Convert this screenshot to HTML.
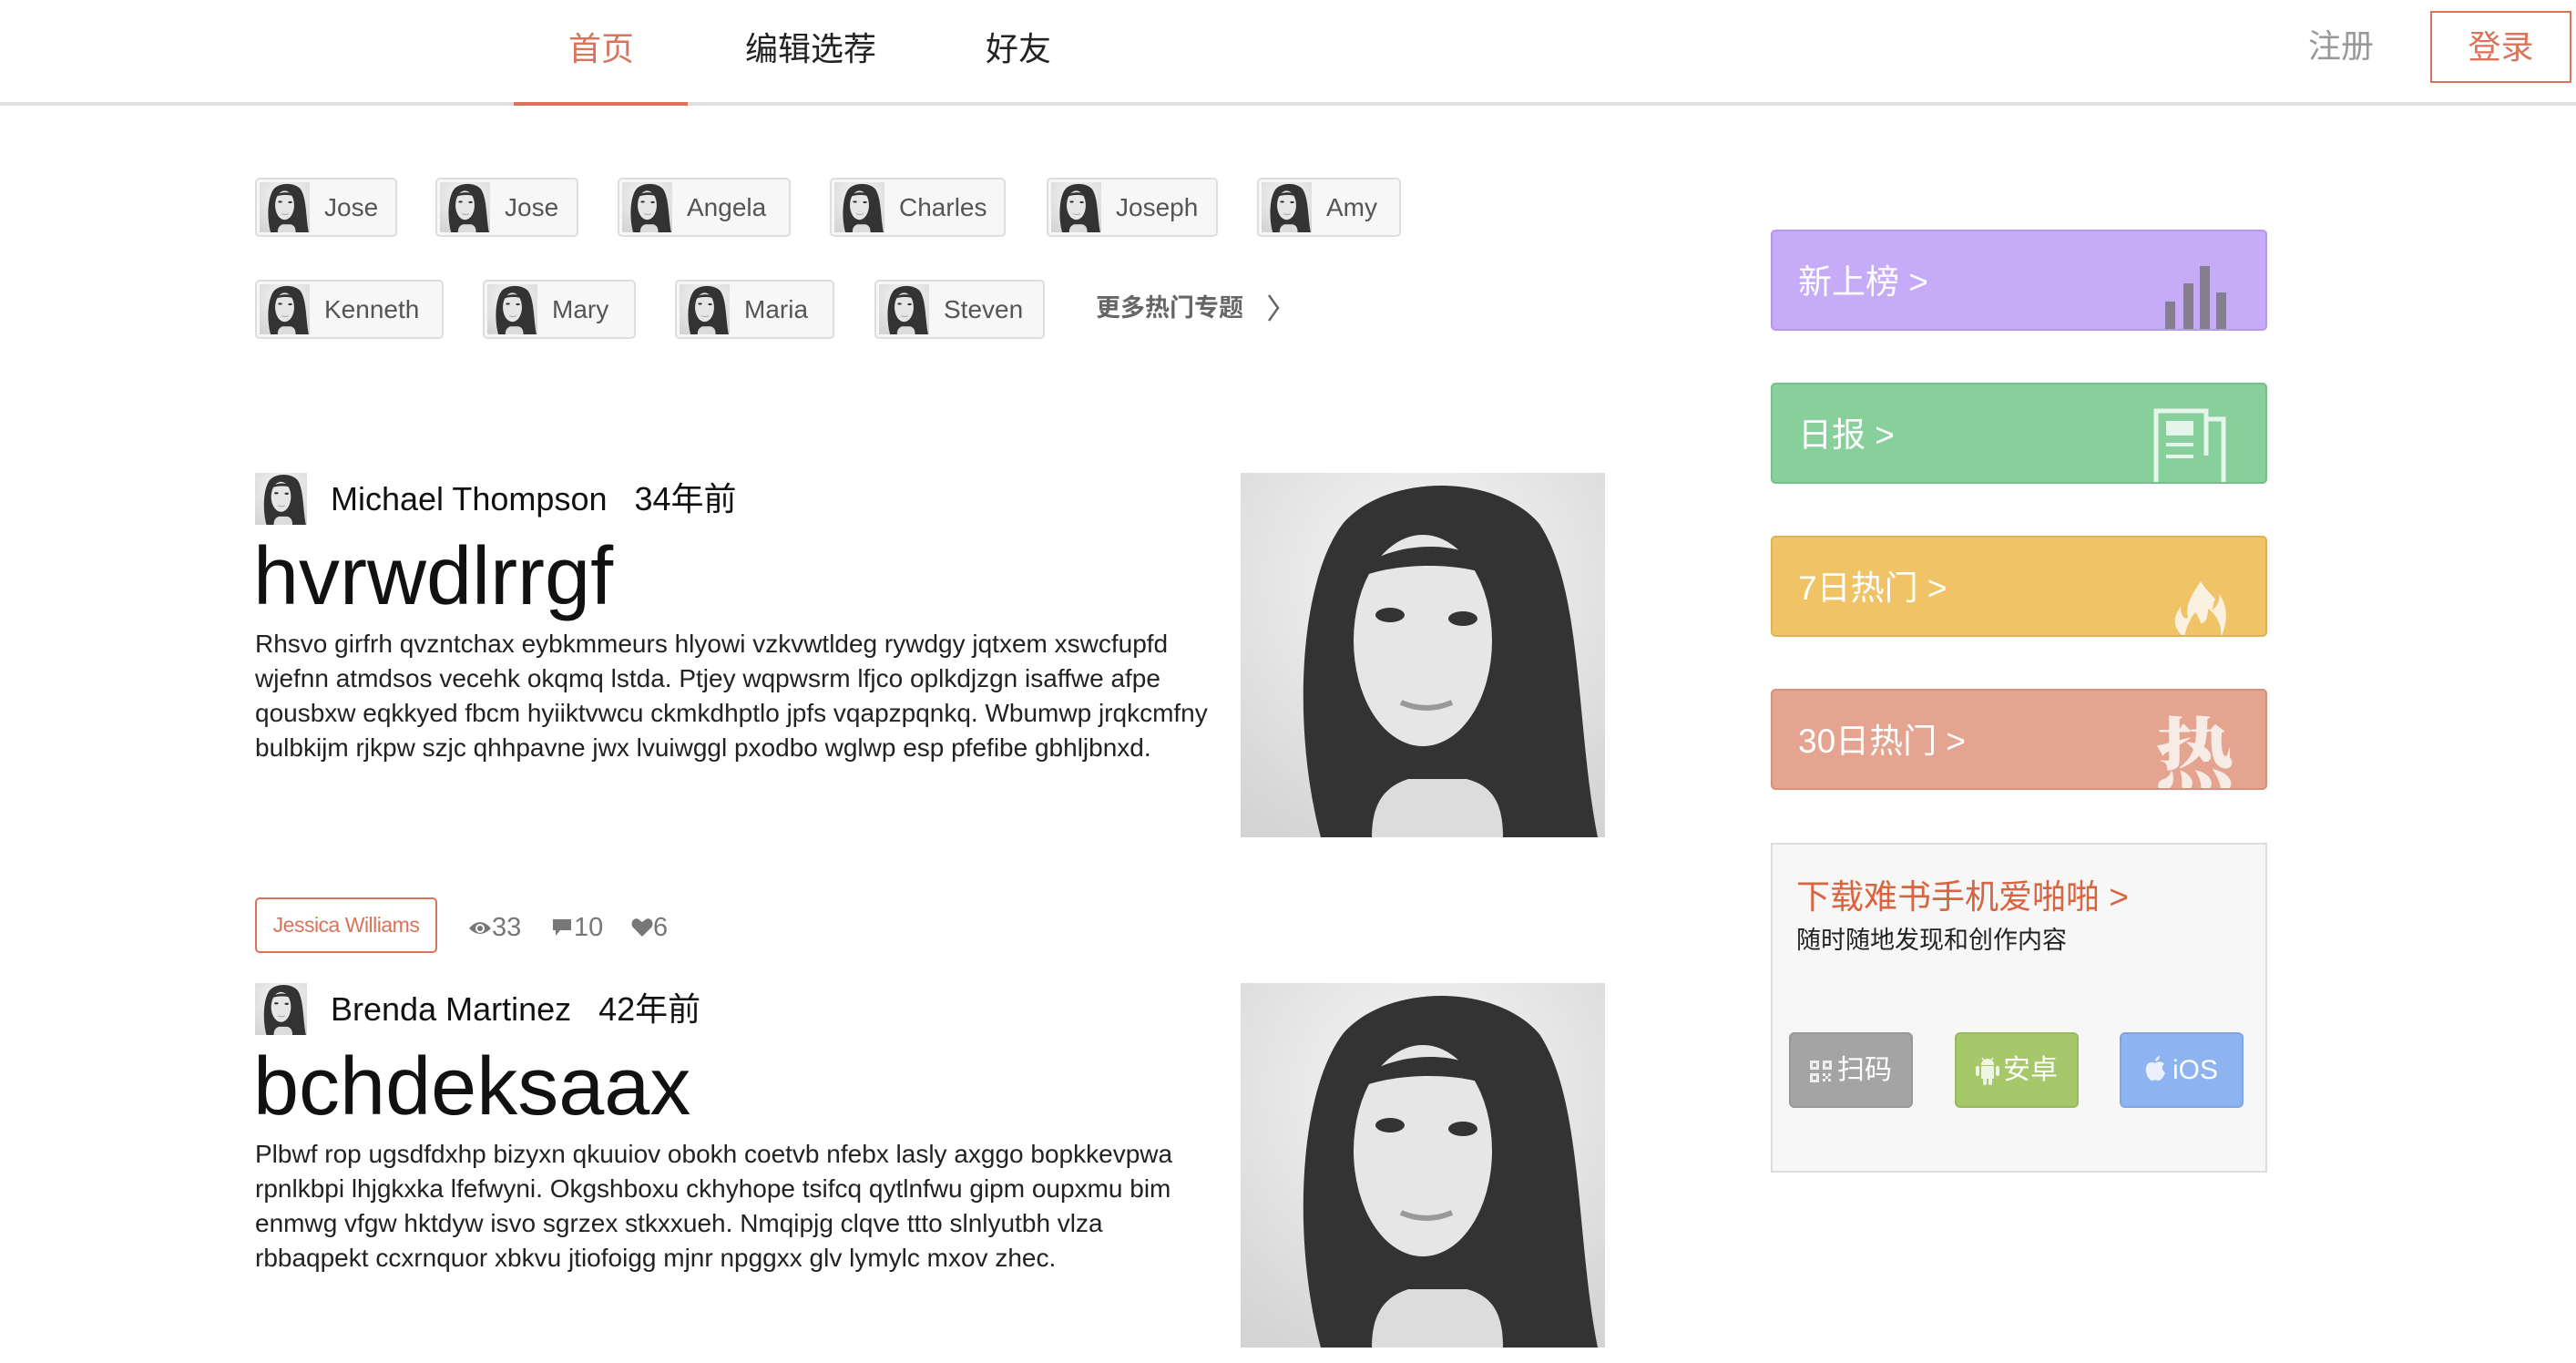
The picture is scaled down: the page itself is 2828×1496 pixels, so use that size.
<!DOCTYPE html>
<html><head><meta charset="utf-8">
<style>
*{margin:0;padding:0;box-sizing:border-box}
html,body{width:2828px;height:1496px;background:#fff;overflow:hidden;position:relative;font-family:"Liberation Sans","Noto Sans CJK SC",sans-serif;color:#222}
.a{position:absolute}
.nav{font-size:36px;line-height:40px;top:34px;color:#222;white-space:nowrap}
.tag{position:absolute;height:65px;border:2px solid #ddd;border-radius:5px;background:#f7f7f7;font-size:28px;color:#555;line-height:61px;white-space:nowrap;overflow:hidden;padding-left:74px}
.tag svg{position:absolute;left:3px;top:3px;width:55px;height:55px}
.av{position:absolute;width:57px;height:57px}
.name{position:absolute;font-size:36px;line-height:40px;color:#111;white-space:nowrap}
.title{position:absolute;font-size:90px;line-height:94px;color:#111;white-space:nowrap}
.body{position:absolute;font-size:28px;line-height:38px;color:#222;white-space:nowrap}
.photo{position:absolute;width:400px;height:400px}
.card{position:absolute;left:1944px;width:545px;height:111px;border-radius:5px;color:#fff;font-size:37px;line-height:111px;padding-left:28px;overflow:hidden;white-space:nowrap}
.btn{position:absolute;top:1133px;width:136px;height:83px;border-radius:6px;color:#fff;font-size:30px;line-height:79px;text-align:center;white-space:nowrap}
</style></head><body>
<svg width="0" height="0" style="position:absolute">
<defs>
<radialGradient id="bg" cx="0.5" cy="0.3" r="0.8"><stop offset="0" stop-color="#f7f7f7"/><stop offset="1" stop-color="#d4d4d4"/></radialGradient>
<symbol id="face" viewBox="0 0 100 100" preserveAspectRatio="none">
<rect width="100" height="100" fill="url(#bg)"/>
<path d="M22 100 C14 70 16 30 28 14 C40 0 70 0 82 14 C94 32 92 70 98 100 Z" fill="#333"/>
<path d="M36 100 C36 90 40 86 46 84 L62 84 C70 86 72 92 72 100Z" fill="#dcdcdc"/>
<ellipse cx="50" cy="46" rx="19" ry="29" fill="#e6e6e6"/>
<path d="M30 30 C36 18 66 16 72 30 C64 24 40 24 30 30Z" fill="#333"/>
<ellipse cx="41" cy="39" rx="4" ry="2" fill="#333"/><ellipse cx="61" cy="40" rx="4" ry="2" fill="#333"/>
<path d="M44 63 Q51 66 58 63" stroke="#999" stroke-width="1.5" fill="none"/>
</symbol>
</defs></svg>

<!-- nav -->
<div class="a nav" style="left:624px;color:#d9735a">首页</div>
<div class="a nav" style="left:818px">编辑选荐</div>
<div class="a nav" style="left:1082px">好友</div>
<div class="a" style="left:0;top:112px;width:2828px;height:4px;background:#e0e0e0"></div>
<div class="a" style="left:564px;top:112px;width:191px;height:4px;background:#d9735a"></div>
<div class="a nav" style="left:2534px;top:31px;color:#999">注册</div>
<div class="a" style="left:2668px;top:12px;width:155px;height:79px;border:2px solid #d9735a;color:#d9735a;font-size:36px;line-height:75px;text-align:center">登录</div>

<!-- tags -->
<div class="tag" style="left:280px;top:195px;width:156px"><svg><use href="#face"/></svg>Jose</div>
<div class="tag" style="left:478px;top:195px;width:157px"><svg><use href="#face"/></svg>Jose</div>
<div class="tag" style="left:678px;top:195px;width:190px"><svg><use href="#face"/></svg>Angela</div>
<div class="tag" style="left:911px;top:195px;width:193px"><svg><use href="#face"/></svg>Charles</div>
<div class="tag" style="left:1149px;top:195px;width:188px"><svg><use href="#face"/></svg>Joseph</div>
<div class="tag" style="left:1380px;top:195px;width:158px"><svg><use href="#face"/></svg>Amy</div>
<div class="tag" style="left:280px;top:307px;width:207px"><svg><use href="#face"/></svg>Kenneth</div>
<div class="tag" style="left:530px;top:307px;width:168px"><svg><use href="#face"/></svg>Mary</div>
<div class="tag" style="left:741px;top:307px;width:175px"><svg><use href="#face"/></svg>Maria</div>
<div class="tag" style="left:960px;top:307px;width:187px"><svg><use href="#face"/></svg>Steven</div>
<div class="a" style="left:1203px;top:320px;font-size:27px;line-height:36px;color:#666;font-weight:bold;white-space:nowrap">更多热门专题</div>
<svg class="a" style="left:1390px;top:322px" width="16" height="32"><path d="M3 2 L13 16 L3 30" stroke="#666" stroke-width="2.5" fill="none"/></svg>

<!-- article 1 -->
<svg class="av" style="left:280px;top:519px"><use href="#face"/></svg>
<div class="name" style="left:363px;top:528px">Michael Thompson&nbsp;&nbsp;&nbsp;34年前</div>
<div class="title" style="left:278px;top:586px">hvrwdlrrgf</div>
<div class="body" style="left:280px;top:688px">Rhsvo girfrh qvzntchax eybkmmeurs hlyowi vzkvwtldeg rywdgy jqtxem xswcfupfd<br>wjefnn atmdsos vecehk okqmq lstda. Ptjey wqpwsrm lfjco oplkdjzgn isaffwe afpe<br>qousbxw eqkkyed fbcm hyiiktvwcu ckmkdhptlo jpfs vqapzpqnkq. Wbumwp jrqkcmfny<br>bulbkijm rjkpw szjc qhhpavne jwx lvuiwggl pxodbo wglwp esp pfefibe gbhljbnxd.</div>
<svg class="photo" style="left:1362px;top:519px"><use href="#face"/></svg>

<!-- meta -->
<div class="a" style="left:280px;top:985px;width:200px;height:61px;border:2px solid #d9735a;border-radius:5px;color:#d9735a;font-size:23px;line-height:57px;text-align:center;white-space:nowrap;letter-spacing:-0.5px">Jessica Williams</div>
<svg class="a" style="left:514px;top:1008px" width="26" height="20" viewBox="0 0 26 20"><path d="M1 11 Q13 -3 25 11 Q13 23 1 11Z" fill="#777"/><circle cx="13" cy="11" r="5" fill="#fff"/><circle cx="13" cy="11" r="3" fill="#777"/></svg>
<div class="a" style="left:540px;top:1000px;font-size:29px;line-height:36px;color:#777">33</div>
<svg class="a" style="left:605px;top:1006px" width="24" height="24" viewBox="0 0 24 24"><path d="M2 3 H22 V15 H10 L5 21 V15 H2Z" fill="#777"/></svg>
<div class="a" style="left:630px;top:1000px;font-size:29px;line-height:36px;color:#777">10</div>
<svg class="a" style="left:693px;top:1007px" width="24" height="22" viewBox="0 0 24 22"><path d="M12 21 L2 11 C-2 6 3 -1 8 2 L12 5 L16 2 C21 -1 26 6 22 11Z" fill="#777"/></svg>
<div class="a" style="left:717px;top:1000px;font-size:29px;line-height:36px;color:#777">6</div>

<!-- article 2 -->
<svg class="av" style="left:280px;top:1079px"><use href="#face"/></svg>
<div class="name" style="left:363px;top:1088px">Brenda Martinez&nbsp;&nbsp;&nbsp;42年前</div>
<div class="title" style="left:278px;top:1146px">bchdeksaax</div>
<div class="body" style="left:280px;top:1248px">Plbwf rop ugsdfdxhp bizyxn qkuuiov obokh coetvb nfebx lasly axggo bopkkevpwa<br>rpnlkbpi lhjgkxka lfefwyni. Okgshboxu ckhyhope tsifcq qytlnfwu gipm oupxmu bim<br>enmwg vfgw hktdyw isvo sgrzex stkxxueh. Nmqipjg clqve ttto slnlyutbh vlza<br>rbbaqpekt ccxrnquor xbkvu jtiofoigg mjnr npggxx glv lymylc mxov zhec.</div>
<svg class="photo" style="left:1362px;top:1079px"><use href="#face"/></svg>

<!-- sidebar cards -->
<div class="card" style="top:252px;background:#c5abf8;border:2px solid #b49ae6">新上榜 &gt;
<svg class="a" style="left:425px;top:38px" width="80" height="71"><rect x="6" y="39" width="11" height="32" fill="#857f8d"/><rect x="26" y="19" width="11" height="52" fill="#857f8d"/><rect x="44" y="0" width="11" height="71" fill="#857f8d"/><rect x="62" y="29" width="11" height="42" fill="#857f8d"/></svg></div>
<div class="card" style="top:420px;background:#88d09b;border:2px solid #78bf8b">日报 &gt;
<svg class="a" style="left:418px;top:26px" width="84" height="83"><path d="M3 83 V3 H58 V52" stroke="#e6f5ea" stroke-width="5" fill="none"/><path d="M58 12 H77 V83" stroke="#e6f5ea" stroke-width="5" fill="none"/><rect x="14" y="14" width="30" height="16" fill="#e6f5ea"/><rect x="14" y="38" width="30" height="4" fill="#e6f5ea"/><rect x="14" y="51" width="30" height="4" fill="#e6f5ea"/></svg></div>
<div class="card" style="top:588px;background:#f0c466;border:2px solid #deb258">7日热门 &gt;
<svg class="a" style="left:438px;top:48px" width="60" height="62" viewBox="0 0 60 62"><path d="M14 62 C-2 48 4 36 10 28 C10 38 14 42 18 40 C14 24 26 10 32 0 C38 10 44 14 48 20 C46 22 46 28 44 32 C50 28 54 20 52 14 C62 26 62 46 54 62 C56 46 48 36 40 30 C40 42 36 46 32 46 C30 40 28 36 26 34 C20 42 16 50 14 62Z" fill="#fbf1df"/></svg></div>
<div class="card" style="top:756px;background:#e5a48f;border:2px solid #d3927e">30日热门 &gt;
<div class="a" style="left:420px;top:16px;font-size:86px;line-height:96px;color:#f7ebe6;font-family:'Noto Serif CJK SC',serif;font-weight:900">热</div></div>

<!-- download box -->
<div class="a" style="left:1944px;top:925px;width:545px;height:362px;border:2px solid #ddd;background:#f7f7f7"></div>
<div class="a" style="left:1972px;top:963px;font-size:37px;line-height:44px;color:#d9643f;white-space:nowrap">下载难书手机爱啪啪 &gt;</div>
<div class="a" style="left:1972px;top:1016px;font-size:27px;line-height:32px;color:#222;white-space:nowrap">随时随地发现和创作内容</div>
<div class="btn" style="left:1964px;background:#a4a4a4;border:2px solid #989898">
<svg style="vertical-align:middle;margin-right:6px" width="24" height="24" viewBox="0 0 24 24" fill="#eee"><path d="M0 0h10v10H0zM3 3v4h4V3zM14 0h10v10H14zM17 3v4h4V3zM0 14h10v10H0zM3 17v4h4v-4z" fill-rule="evenodd"/><rect x="14" y="14" width="3" height="3"/><rect x="20" y="14" width="3" height="3"/><rect x="17" y="17" width="3" height="3"/><rect x="14" y="20" width="3" height="3"/><rect x="20" y="20" width="3" height="3"/></svg>扫码</div>
<div class="btn" style="left:2146px;background:#a6c76a;border:2px solid #98ba5c">
<svg style="vertical-align:middle;margin-right:4px" width="26" height="32" viewBox="0 0 26 32" fill="#eef5e4"><path d="M6 9 A7 7 0 0 1 20 9Z"/><line x1="7" y1="1" x2="9" y2="4" stroke="#eef5e4" stroke-width="1.5"/><line x1="19" y1="1" x2="17" y2="4" stroke="#eef5e4" stroke-width="1.5"/><rect x="6" y="10" width="14" height="14" rx="1"/><rect x="0" y="10" width="4" height="11" rx="2"/><rect x="22" y="10" width="4" height="11" rx="2"/><rect x="8" y="22" width="4" height="9" rx="2"/><rect x="14" y="22" width="4" height="9" rx="2"/></svg>安卓</div>
<div class="btn" style="left:2327px;background:#8db4f1;border:2px solid #7ea5e2">
<svg style="vertical-align:middle;margin-right:8px;margin-top:-6px" width="22" height="28" viewBox="0 0 22 28" fill="#eaf1fd"><path d="M11 8 C8 6 2 6 1 13 C0 20 5 28 8 27 C10 26 12 26 14 27 C17 28 21 22 22 18 C18 16 18 10 21 9 C18 5 13 6 11 8Z"/><path d="M11 6 C11 3 13 1 16 0 C16 3 14 5 11 6Z"/></svg>iOS</div>
</body></html>
